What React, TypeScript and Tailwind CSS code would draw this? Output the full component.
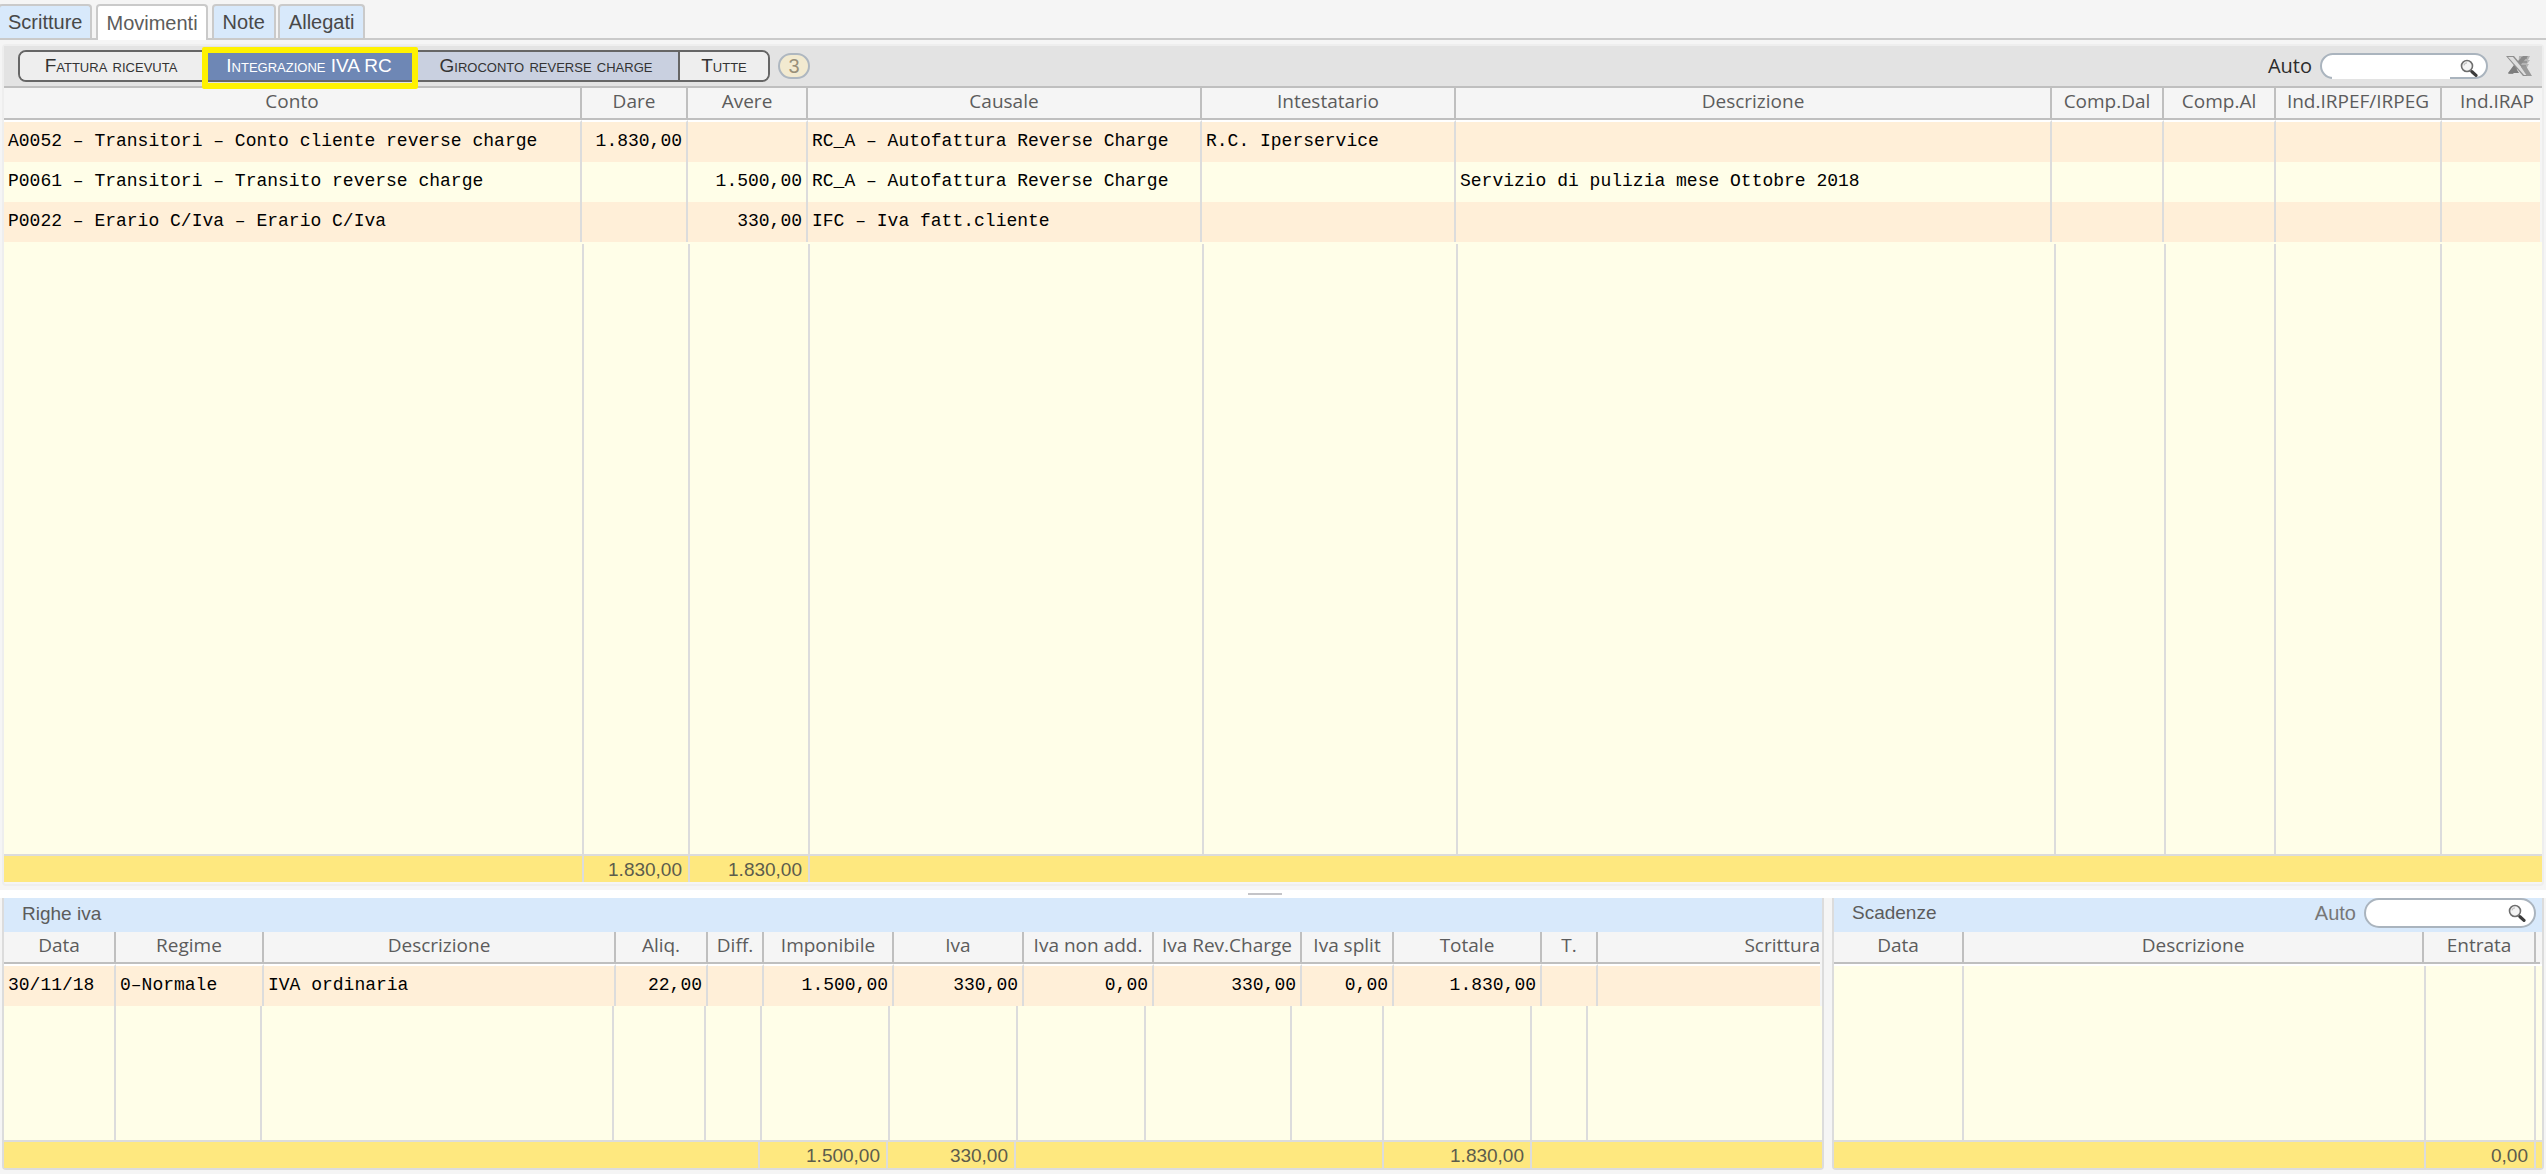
import React, { useState } from 'react';
import clsx from 'clsx';

interface Column {
  label: string;
  width: string;
  align?: 'left' | 'right';
  headerClass?: string;
}

interface Slot {
  width: string;
  value?: string;
  line?: boolean;
}

interface DataGridProps {
  label: string;
  columns: Column[];
  rows: string[][];
  filler: string[];
  fillerHeight: string;
  totals: Slot[];
}

const TABS = ['Scritture', 'Movimenti', 'Note', 'Allegati'];

const movimentiColumns: Column[] = [
  { label: 'Conto', width: 'w-[578px]' },
  { label: 'Dare', width: 'w-[106px]', align: 'right' },
  { label: 'Avere', width: 'w-[120px]', align: 'right' },
  { label: 'Causale', width: 'w-[394px]' },
  { label: 'Intestatario', width: 'w-[254px]' },
  { label: 'Descrizione', width: 'w-auto' },
  { label: 'Comp.Dal', width: 'w-[112px]' },
  { label: 'Comp.Al', width: 'w-[112px]' },
  { label: 'Ind.IRPEF/IRPEG', width: 'w-[166px]' },
  { label: 'Ind.IRAP', width: 'w-[98px]', headerClass: 'pl-3' },
];

const movimentiRows = [
  ['A0052 – Transitori – Conto cliente reverse charge', '1.830,00', '', 'RC_A – Autofattura Reverse Charge', 'R.C. Iperservice', '', '', '', '', ''],
  ['P0061 – Transitori – Transito reverse charge', '', '1.500,00', 'RC_A – Autofattura Reverse Charge', '', 'Servizio di pulizia mese Ottobre 2018', '', '', '', ''],
  ['P0022 – Erario C/Iva – Erario C/Iva', '', '330,00', 'IFC – Iva fatt.cliente', '', '', '', '', '', ''],
];

const movimentiFiller = [
  'w-[580px]', 'w-[106px]', 'w-[120px]', 'w-[394px]', 'w-[254px]', 'flex-1',
  'w-[110px]', 'w-[110px]', 'w-[166px]', 'w-[98px]',
];

const movimentiTotals: Slot[] = [
  { width: 'w-[580px]', line: true },
  { width: 'w-[106px]', value: '1.830,00', line: true },
  { width: 'w-[120px]', value: '1.830,00', line: true },
  { width: 'flex-1' },
];

const ivaColumns: Column[] = [
  { label: 'Data', width: 'w-[112px]' },
  { label: 'Regime', width: 'w-[148px]' },
  { label: 'Descrizione', width: 'w-auto' },
  { label: 'Aliq.', width: 'w-[92px]', align: 'right' },
  { label: 'Diff.', width: 'w-[56px]' },
  { label: 'Imponibile', width: 'w-[130px]', align: 'right' },
  { label: 'Iva', width: 'w-[130px]', align: 'right' },
  { label: 'Iva non add.', width: 'w-[130px]', align: 'right' },
  { label: 'Iva Rev.Charge', width: 'w-[148px]', align: 'right' },
  { label: 'Iva split', width: 'w-[92px]', align: 'right' },
  { label: 'Totale', width: 'w-[148px]', align: 'right' },
  { label: 'T.', width: 'w-[56px]' },
  { label: 'Scrittura', width: 'w-[222px]', headerClass: 'text-right' },
];

const ivaRows = [
  ['30/11/18', '0–Normale', 'IVA ordinaria', '22,00', '', '1.500,00', '330,00', '0,00', '330,00', '0,00', '1.830,00', '', ''],
];

const ivaFiller = [
  'w-[112px]', 'w-[146px]', 'flex-1', 'w-[92px]', 'w-[56px]', 'w-[128px]', 'w-[128px]',
  'w-[128px]', 'w-[146px]', 'w-[92px]', 'w-[148px]', 'w-[56px]', 'w-[232px]',
];

const ivaTotals: Slot[] = [
  { width: 'flex-1', line: true },
  { width: 'w-[128px]', value: '1.500,00', line: true },
  { width: 'w-[128px]', value: '330,00', line: true },
  { width: 'w-[368px]', line: true },
  { width: 'w-[148px]', value: '1.830,00', line: true },
  { width: 'w-[290px]' },
];

const scadenzeColumns: Column[] = [
  { label: 'Data', width: 'w-[130px]' },
  { label: 'Descrizione', width: 'w-auto' },
  { label: 'Entrata', width: 'w-[112px]' },
  { label: '', width: 'w-1' },
];

const scadenzeFiller = ['w-[130px]', 'flex-1', 'w-[110px]', 'w-1'];

const scadenzeTotals: Slot[] = [
  { width: 'flex-1', line: true },
  { width: 'w-[110px]', value: '0,00', line: true },
  { width: 'w-1.5' },
];

const DataGrid: React.FC<DataGridProps> = ({ label, columns, rows, filler, fillerHeight, totals }) => (
  <>
    <div className="pr-0.5">
      <table aria-label={label} className="w-full table-fixed border-separate border-spacing-0">
        <colgroup>
          {columns.map((col, i) => (
            <col key={i} className={col.width} />
          ))}
        </colgroup>
        <thead>
          <tr>
            {columns.map((col, i) => (
              <th
                key={i}
                scope="col"
                className={clsx(
                  'h-8 border-b-2 border-[#bfbfbf] p-0 pb-1 text-center font-["Open_Sans",sans-serif] text-[19px] leading-6 font-normal whitespace-nowrap text-[#5c5c5c]',
                  i < columns.length - 1 && 'border-r-2',
                  col.headerClass
                )}
              >
                {col.label}
              </th>
            ))}
          </tr>
        </thead>
        <tbody>
          {rows.map((row, r) => (
            <tr key={r} className={r % 2 === 0 ? 'bg-[#ffefd8]' : 'bg-[#fffee8]'}>
              {row.map((cell, i) => (
                <td
                  key={i}
                  className={clsx(
                    'border-[#dcdcdc] pt-0 pb-0.5 font-["Liberation_Mono",monospace] text-lg leading-6 whitespace-nowrap text-black',
                    r === 0 ? 'h-[42px] border-t-2 border-t-white' : 'h-10',
                    i < row.length - 1 && 'border-r-2',
                    columns[i].align === 'right' ? 'pr-1 text-right' : 'pl-1 text-left'
                  )}
                >
                  {cell}
                </td>
              ))}
            </tr>
          ))}
        </tbody>
      </table>
    </div>
    <div className={clsx('flex bg-[#fffee8] pr-0.5', fillerHeight, rows.length === 0 && 'border-t-2 border-white')}>
      {filler.map((width, i) => (
        <div key={i} className={clsx(width, i < filler.length - 1 && 'border-r-2 border-[#dcdcdc]')} />
      ))}
    </div>
    <div className="flex h-7 border-t-2 border-[#dcdcdc] bg-[#fee87f]">
      {totals.map((slot, i) => (
        <div
          key={i}
          className={clsx(
            'flex items-center justify-end pt-0.5 text-[19px] leading-6 text-[#5c5c4c]',
            slot.width,
            slot.value && 'pr-1.5',
            slot.line && 'border-r-2 border-[#dcdcdc]'
          )}
        >
          {slot.value}
        </div>
      ))}
    </div>
  </>
);

const Magnifier = () => (
  <svg viewBox="0 0 18 18" className="size-[18px] shrink-0" fill="none" aria-hidden="true">
    <circle cx="7" cy="7" r="5.5" fill="#f4f4f4" stroke="#6e6e6e" strokeWidth="1.6" />
    <path d="M4 6.5A3.2 3.2 0 0 1 7 3.8" stroke="#c4c4c4" strokeWidth="1.2" />
    <path d="M10.5 11.5L12 13" stroke="#8a8a8a" strokeWidth="2" />
    <path d="M12 12.8L16 16.4" stroke="#3c3c3c" strokeWidth="3.2" strokeLinecap="round" />
  </svg>
);

const ExcelIcon = () => (
  <svg viewBox="0 0 26 22" className="h-[22px] w-[26px]" aria-hidden="true">
    <path d="M13 1h11l-2 4h2l-3 4h2l-3 5H12z" fill="#b4b4b4" />
    <path d="M15 3h6M15 7h6M14 11h6" stroke="#8c8c8c" strokeWidth="1.4" />
    <path d="M9 9l8-8h5L7 19H2z" fill="#8b8b8b" />
    <path d="M2 18l6-8 5 8z" fill="#7d7d7d" />
    <path d="M0 1h8l17 20h-8z" fill="#8f8f8f" />
    <path d="M2 2h5l15 18h-4z" fill="#dedede" />
    <path d="M15 12l5-1 6 10h-5z" fill="#9a9a9a" />
  </svg>
);

const segments = [
  { label: 'Fattura ricevuta', className: 'w-[184px] border-r-2 bg-[#eeeeee] text-[#333]' },
  { label: 'Integrazione IVA RC', className: 'w-[210px] bg-[#6e87b5] text-white' },
  { label: 'Giroconto reverse charge', className: 'w-[266px] border-r-2 bg-[#c9d0e0] text-[#333]' },
  { label: 'Tutte', className: 'w-[88px] bg-[#eeeeee] text-[#333]' },
];

const App: React.FC = () => {
  const [search, setSearch] = useState('');
  const [scadenzeSearch, setScadenzeSearch] = useState('');

  return (
    <div className='flex min-h-screen flex-col bg-[#f5f5f5] pb-1 font-["Liberation_Sans",sans-serif]'>
      <nav className="flex h-10 items-end border-b-2 border-[#cacaca]">
        {TABS.map((tab) => (
          <button
            key={tab}
            type="button"
            className={clsx(
              'rounded-t border-2 border-b-0 border-[#cacaca] text-xl leading-6',
              tab === 'Movimenti'
                ? 'relative top-0.5 mx-1 h-9 bg-white px-2 text-[#5c5c5c]'
                : 'h-[34px] bg-[#d8e9fb] text-[#484848]',
              tab === 'Scritture' && '-ml-0.5 px-2',
              tab === 'Note' && 'mr-0.5 px-[9px]',
              tab === 'Allegati' && 'px-[9px]'
            )}
          >
            {tab}
          </button>
        ))}
      </nav>

      <section className="mx-0.5 mt-1 flex flex-1 flex-col rounded border-2 border-[#eeeeee]">
        <div className="flex h-[42px] items-center justify-between border-b-2 border-[#bfbfbf] bg-[#e3e3e3] pr-2.5 pl-3.5">
          <div className="flex items-center gap-2">
            <div className="relative flex h-8 rounded-lg border-2 border-[#666]">
              {segments.map((segment, i) => (
                <button
                  key={segment.label}
                  type="button"
                  className={clsx(
                    'border-[#666] text-[19px] leading-6 whitespace-nowrap [font-variant:small-caps]',
                    i === 0 && 'rounded-l-md',
                    i === segments.length - 1 && 'rounded-r-md',
                    segment.className
                  )}
                >
                  {segment.label}
                </button>
              ))}
              {/* highlight frame over the current segment */}
              <div className="pointer-events-none absolute -top-[5px] left-[182px] h-[42px] w-[216px] rounded-xs border-[6px] border-[#fff200]" />
            </div>
            <span className="flex h-[26px] w-8 items-center justify-center rounded-full border-2 border-[#aeb7c0] bg-[#f2ead0] text-xl leading-6 text-[#98907a]">
              3
            </span>
          </div>

          <div className="flex items-center">
            <label htmlFor="search" className='mr-2 font-["Open_Sans",sans-serif] text-xl leading-6 text-[#2c2c2c]'>
              Auto
            </label>
            <div className="flex h-[26px] w-[168px] justify-between rounded-full border-2 border-[#aab4be] bg-white pr-2 pl-2.5">
              <input
                id="search"
                type="text"
                value={search}
                onChange={(e) => setSearch(e.target.value)}
                className="h-6 w-[118px] bg-white text-base outline-none"
              />
              <div className="pt-1">
                <Magnifier />
              </div>
            </div>
            <button type="button" aria-label="Excel" className="ml-4.5">
              <ExcelIcon />
            </button>
          </div>
        </div>

        <DataGrid
          label="Movimenti"
          columns={movimentiColumns}
          rows={movimentiRows}
          filler={movimentiFiller}
          fillerHeight="min-h-40 flex-1 pt-0.5"
          totals={movimentiTotals}
        />
        <div className="h-0.5" />
      </section>

      {/* splitter */}
      <div className="mt-1 flex h-2 items-center justify-center bg-white pr-4">
        <div className="h-0.5 w-[34px] bg-[#c4c4c8]" />
      </div>

      <div className="mx-0.5 flex gap-2">
        <section className="min-w-0 flex-1 rounded-b border-2 border-t-0 border-[#dcdcdc]">
          <h2 className="flex h-[34px] items-center bg-[#d8e9fb] pb-0.5 pl-[18px] text-[19px] leading-6 text-[#5c5c5c]">
            Righe iva
          </h2>
          <DataGrid
            label="Righe iva"
            columns={ivaColumns}
            rows={ivaRows}
            filler={ivaFiller}
            fillerHeight="h-[134px]"
            totals={ivaTotals}
          />
        </section>

        <section className="w-[712px] rounded-b border-2 border-t-0 border-[#dcdcdc]">
          <div className="flex h-[34px] items-center justify-between bg-[#d8e9fb] pr-1.5 pb-1 pl-[18px] text-[19px] leading-6">
            <h2 className="text-[#5c5c5c]">Scadenze</h2>
            <div className="flex items-center">
              <label htmlFor="scadenze-search" className="mr-2 text-xl leading-6 text-[#777]">
                Auto
              </label>
              <div className="flex h-[30px] w-[172px] items-center rounded-full border-2 border-[#aab4be] bg-white pr-2 pl-2.5">
                <input
                  id="scadenze-search"
                  type="text"
                  value={scadenzeSearch}
                  onChange={(e) => setScadenzeSearch(e.target.value)}
                  className="h-6 min-w-0 flex-1 bg-transparent text-base outline-none"
                />
                <Magnifier />
              </div>
            </div>
          </div>
          <DataGrid
            label="Scadenze"
            columns={scadenzeColumns}
            rows={[]}
            filler={scadenzeFiller}
            fillerHeight="h-[176px]"
            totals={scadenzeTotals}
          />
        </section>
      </div>
    </div>
  );
};

export default App;
